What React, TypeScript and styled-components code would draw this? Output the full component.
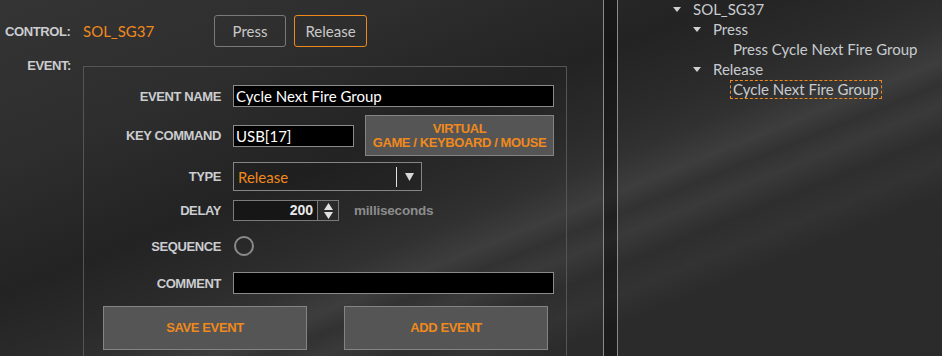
import styled, { createGlobalStyle } from 'styled-components'

const GlobalStyle = createGlobalStyle`
  html, body {
    margin: 0;
    padding: 0;
    background: #2d2d2d;
    overflow: hidden;
  }
`

const ORANGE = '#f0891c'
const LABEL = '#cbcdd0'

const Screen = styled.div`
  width: 942px;
  height: 356px;
  display: flex;
  overflow: hidden;
  font-family: 'Liberation Sans', Arial, sans-serif;
  background:
    linear-gradient(158deg,
      rgba(255, 255, 255, 0) 0%,
      rgba(255, 255, 255, 0) 55%,
      rgba(255, 255, 255, 0.03) 60%,
      rgba(0, 0, 0, 0.06) 63%,
      rgba(255, 255, 255, 0.03) 66%,
      rgba(0, 0, 0, 0.06) 70%,
      rgba(255, 255, 255, 0.02) 74%,
      rgba(0, 0, 0, 0.05) 78%,
      rgba(255, 255, 255, 0) 100%),
    linear-gradient(158deg,
      #343434 0%,
      #2e2e2e 22%,
      #232323 40%,
      #2b2b2b 50%,
      #373737 60%,
      #2e2e2e 75%,
      #2a2a2a 100%);
`

const LeftPanel = styled.div`
  width: 567px;
  flex-shrink: 0;
  display: flex;
  flex-direction: column;
`

const Header = styled.div`
  display: flex;
  align-items: center;
  height: 32px;
  margin-top: 15px;
  padding-left: 5px;
`

const HeadLabel = styled.div`
  width: 78px;
  font-size: 13px;
  font-weight: bold;
  letter-spacing: -0.4px;
  color: ${LABEL};
`

const ControlName = styled.div`
  width: 131px;
  font-family: Lato, sans-serif;
  font-size: 15px;
  color: ${ORANGE};
`

const ToggleButton = styled.button<{ $active?: boolean }>`
  height: 32px;
  width: ${({ $active }) => ($active ? 73 : 72)}px;
  margin-right: 8px;
  padding: 0;
  box-sizing: border-box;
  background: transparent;
  border: 1px solid ${({ $active }) => ($active ? ORANGE : '#7a7a7a')};
  border-radius: 3px;
  font-family: Lato, sans-serif;
  font-size: 15px;
  color: #c8c8c8;
`

const EventSection = styled.div`
  display: flex;
  margin-top: 19px;
`

const EventLabel = styled.div`
  width: 71px;
  margin-right: 12px;
  margin-top: -8px;
  text-align: right;
  font-size: 13px;
  font-weight: bold;
  letter-spacing: -0.4px;
  color: ${LABEL};
`

const EventBox = styled.div`
  width: 484px;
  height: 320px;
  box-sizing: border-box;
  border: 1px solid #555;
  display: flex;
  flex-direction: column;
`

const FieldRow = styled.div<{ $h: number; $mt: number }>`
  display: grid;
  grid-template-columns: 137px 1fr;
  column-gap: 12px;
  align-items: center;
  height: ${({ $h }) => $h}px;
  margin-top: ${({ $mt }) => $mt}px;
`

const FieldLabel = styled.div`
  text-align: right;
  font-size: 13px;
  font-weight: bold;
  letter-spacing: -0.4px;
  color: ${LABEL};
`

const Controls = styled.div`
  display: flex;
  align-items: center;
  height: 100%;
`

const TextBox = styled.div<{ $w: number }>`
  width: ${({ $w }) => $w}px;
  height: 22px;
  box-sizing: border-box;
  background: #000;
  border: 1px solid #8a8a8a;
  padding: 0 2px;
  font-family: Lato, sans-serif;
  font-size: 15px;
  line-height: 20px;
  color: #fff;
  white-space: nowrap;
  overflow: hidden;
`

const PanelButton = styled.button<{ $w: number; $h: number }>`
  width: ${({ $w }) => $w}px;
  height: ${({ $h }) => $h}px;
  box-sizing: border-box;
  padding: 0;
  background: #555;
  border: 1px solid #848484;
  font-family: 'Liberation Sans', Arial, sans-serif;
  font-size: 13px;
  font-weight: bold;
  line-height: 14px;
  letter-spacing: -0.4px;
  color: ${ORANGE};
`

const Select = styled.div`
  width: 189px;
  height: 29px;
  box-sizing: border-box;
  border: 1px solid #858585;
  background: rgba(0, 0, 0, 0.1);
  display: flex;
  align-items: center;
  font-family: Lato, sans-serif;
  font-size: 15px;
  color: ${ORANGE};
`

const SelectValue = styled.div`
  flex: 1;
  padding-left: 4px;
`

const SelectDivider = styled.div`
  width: 1px;
  height: 20px;
  background: #e0e0e0;
`

const SelectArrow = styled.div`
  width: 24px;
  display: flex;
  justify-content: center;
`

const Spin = styled.div`
  display: flex;
  height: 21px;
  box-sizing: border-box;
  border: 1px solid #7a7a7a;
  background: #161616;
`

const SpinValue = styled.div`
  width: 83px;
  padding-right: 4px;
  box-sizing: border-box;
  text-align: right;
  font-family: 'Liberation Sans', Arial, sans-serif;
  font-size: 14px;
  font-weight: bold;
  line-height: 19px;
  color: #e8e8e8;
`

const SpinArrows = styled.div`
  width: 20px;
  border-left: 1px solid #7a7a7a;
  background: #2a2a2a;
  display: flex;
  align-items: center;
  justify-content: center;
`

const Unit = styled.div`
  margin-left: 15px;
  font-size: 13.5px;
  font-weight: bold;
  letter-spacing: -0.2px;
  color: #8c8c8c;
`

const Radio = styled.div`
  width: 20px;
  height: 20px;
  box-sizing: border-box;
  margin-left: 1px;
  border: 2px solid #8a8a8a;
  border-radius: 50%;
`

const ActionRow = styled.div`
  display: flex;
  gap: 37px;
  padding-left: 19px;
  margin-top: 12px;
`

const Divider = styled.div`
  width: 15px;
  flex-shrink: 0;
  margin-left: 36px;
  box-sizing: border-box;
  border-left: 1px solid #8a8a8a;
  border-right: 1px solid #8a8a8a;
  background: rgba(0, 0, 0, 0.35);
`

const Tree = styled.div`
  flex: 1;
  padding-left: 53px;
  margin-top: -1px;
  font-family: Lato, sans-serif;
  font-size: 15px;
  color: #c8ccd0;
`

const TreeRow = styled.div<{ $level: number }>`
  display: flex;
  align-items: center;
  height: 20px;
  padding-left: ${({ $level }) => $level * 20}px;
`

const Caret = styled.div`
  width: 22px;
  flex-shrink: 0;
  display: flex;
  align-items: center;
  padding-left: 2px;
  box-sizing: border-box;
`

const TreeText = styled.span<{ $selected?: boolean }>`
  padding: 0 2px;
  line-height: 17px;
  margin-left: -3px;
  border: 1px dashed ${({ $selected }) => ($selected ? ORANGE : 'transparent')};
`

const Triangle = ({ color = '#d0d0d0' }: { color?: string }) => (
  <svg width="8" height="5" viewBox="0 0 8 5">
    <path d="M0 0 H8 L4 5 Z" fill={color} />
  </svg>
)

const tree = [
  { level: 0, text: 'SOL_SG37', open: true },
  { level: 1, text: 'Press', open: true },
  { level: 2, text: 'Press Cycle Next Fire Group' },
  { level: 1, text: 'Release', open: true },
  { level: 2, text: 'Cycle Next Fire Group', selected: true },
]

export default function App() {
  return (
    <>
      <GlobalStyle />
      <Screen>
        <LeftPanel>
          <Header>
            <HeadLabel>CONTROL:</HeadLabel>
            <ControlName>SOL_SG37</ControlName>
            <ToggleButton>Press</ToggleButton>
            <ToggleButton $active>Release</ToggleButton>
          </Header>
          <EventSection>
            <EventLabel>EVENT:</EventLabel>
            <EventBox>
              <FieldRow $h={22} $mt={18}>
                <FieldLabel>EVENT NAME</FieldLabel>
                <Controls>
                  <TextBox $w={321}>Cycle Next Fire Group</TextBox>
                </Controls>
              </FieldRow>
              <FieldRow $h={41} $mt={8}>
                <FieldLabel>KEY COMMAND</FieldLabel>
                <Controls>
                  <TextBox $w={121}>USB[17]</TextBox>
                  <PanelButton $w={189} $h={41} style={{ marginLeft: 11 }}>
                    VIRTUAL
                    <br />
                    GAME / KEYBOARD / MOUSE
                  </PanelButton>
                </Controls>
              </FieldRow>
              <FieldRow $h={29} $mt={6}>
                <FieldLabel>TYPE</FieldLabel>
                <Controls>
                  <Select>
                    <SelectValue>Release</SelectValue>
                    <SelectDivider />
                    <SelectArrow>
                      <svg width="9" height="8" viewBox="0 0 9 8">
                        <path d="M0 0 H9 L4.5 8 Z" fill="#d8d8d8" />
                      </svg>
                    </SelectArrow>
                  </Select>
                </Controls>
              </FieldRow>
              <FieldRow $h={21} $mt={9}>
                <FieldLabel>DELAY</FieldLabel>
                <Controls>
                  <Spin>
                    <SpinValue>200</SpinValue>
                    <SpinArrows>
                      <svg width="9" height="16" viewBox="0 0 9 16">
                        <path d="M4.5 0 L9 7 H0 Z M0 9 H9 L4.5 16 Z" fill="#e0e0e0" />
                      </svg>
                    </SpinArrows>
                  </Spin>
                  <Unit>milliseconds</Unit>
                </Controls>
              </FieldRow>
              <FieldRow $h={20} $mt={15}>
                <FieldLabel>SEQUENCE</FieldLabel>
                <Controls>
                  <Radio />
                </Controls>
              </FieldRow>
              <FieldRow $h={22} $mt={16}>
                <FieldLabel>COMMENT</FieldLabel>
                <Controls>
                  <TextBox $w={321} />
                </Controls>
              </FieldRow>
              <ActionRow>
                <PanelButton $w={204} $h={44}>SAVE EVENT</PanelButton>
                <PanelButton $w={204} $h={44}>ADD EVENT</PanelButton>
              </ActionRow>
            </EventBox>
          </EventSection>
        </LeftPanel>
        <Divider />
        <Tree>
          {tree.map((node) => (
            <TreeRow key={node.text} $level={node.level}>
              <Caret>{node.open && <Triangle />}</Caret>
              <TreeText $selected={node.selected}>{node.text}</TreeText>
            </TreeRow>
          ))}
        </Tree>
      </Screen>
    </>
  )
}
